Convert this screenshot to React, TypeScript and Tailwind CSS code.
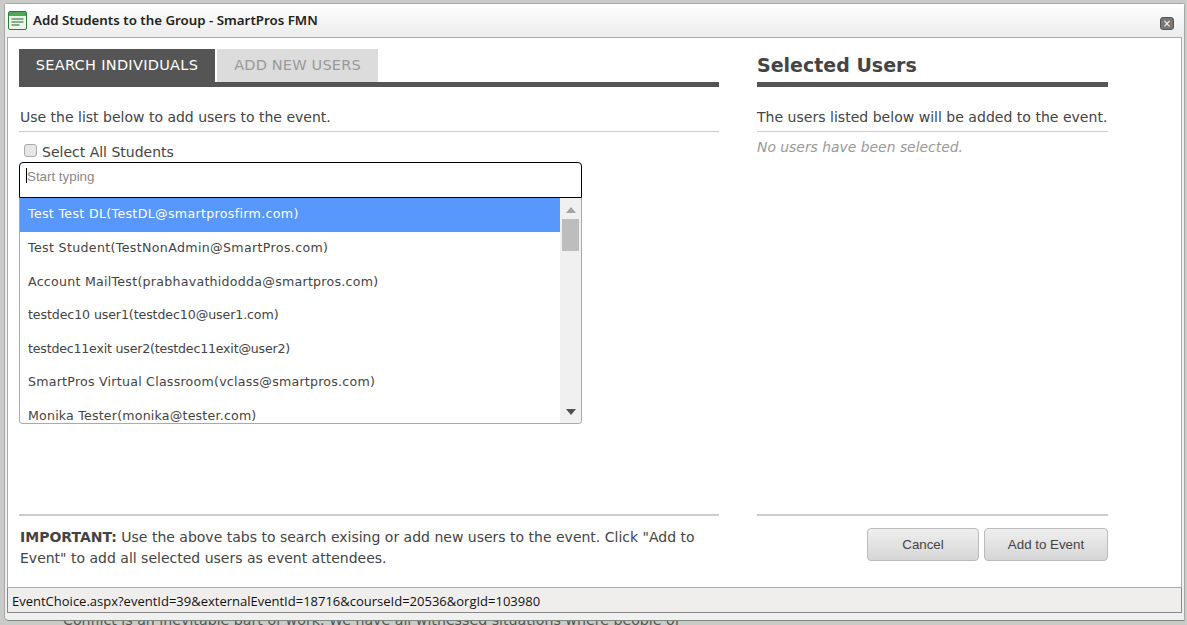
import React from "react";

const body = { fontFamily: '"DejaVu Sans", sans-serif' };
const users = [
  { t: "Test Test DL(TestDL@smartprosfirm.com)", c: "tracking-[0.33px]" },
  { t: "Test Student(TestNonAdmin@SmartPros.com)", c: "tracking-[0.35px]" },
  { t: "Account MailTest(prabhavathidodda@smartpros.com)", c: "tracking-[0.26px]" },
  { t: "testdec10 user1(testdec10@user1.com)", c: "tracking-[-0.1px]" },
  { t: "testdec11exit user2(testdec11exit@user2)", c: "tracking-[-0.2px]" },
  { t: "SmartPros Virtual Classroom(vclass@smartpros.com)", c: "tracking-[0.24px]" },
  { t: "Monika Tester(monika@tester.com)", c: "tracking-[0.2px]" },
];

function WinIcon() {
  return (
    <svg width="19" height="19" viewBox="0 0 19 19" className="shrink-0">
      <rect x="0.5" y="0.5" width="18" height="18" rx="1.5" fill="#eaf5ea" stroke="#2f7a3a" />
      <rect x="1" y="1" width="17" height="4" fill="#4fa858" />
      <path d="M3.5 8h12M3.5 11h12M3.5 14h8" stroke="#23602e" strokeWidth="1.2" />
    </svg>
  );
}

export default function App() {
  return (
    <div className="relative h-[625px] w-[1187px] overflow-hidden bg-[#c9cbc9]" style={body}>
      <div className="absolute left-[63px] top-[610px] whitespace-nowrap text-[14.2px] text-[#555]">
        Conflict is an inevitable part of work. We have all witnessed situations where people of
      </div>
      <div className="relative ml-[4px] mt-[3px] flex h-[618px] w-[1181px] flex-col rounded-t-[3px] rounded-bl-[5px] border border-b-[#7d8a7b] border-[#a8a8a8] bg-[#f0f0f0] pb-[7px]">
        <div className="flex h-[33px] shrink-0 items-center bg-gradient-to-b from-[#ffffff] to-[#ececec] pl-[3px] pr-[10px]">
          <WinIcon />
          <span className="ml-[6px] text-[13.3px] font-semibold text-[#222]" style={{ fontFamily: '"Noto Sans", sans-serif' }}>
            Add Students to the Group - SmartPros FMN
          </span>
          <span className="ml-auto mt-[6px] flex h-[13px] w-[14px] items-center justify-center rounded-[3px] border border-[#555] bg-[#777] text-[10px] leading-none text-white">
            ×
          </span>
        </div>
        <div className="mx-[2px] flex min-h-0 flex-1 border border-[#aaa] bg-white pl-[11px] pt-[11px]">
          <div className="flex w-[700px] shrink-0 flex-col">
            <div className="flex h-[38px] shrink-0 gap-[2px] border-b-[5px] border-[#555]">
              <div className="flex w-[196px] items-center justify-center bg-[#555] text-[14.5px] tracking-[0.3px] text-white">SEARCH INDIVIDUALS</div>
              <div className="flex w-[161px] items-center justify-center bg-[#dcdcdc] text-[14.5px] tracking-[0.2px] text-[#999]">ADD NEW USERS</div>
            </div>
            <p className="mt-[21px] border-b border-[#ccc] pb-[5px] pl-[1px] text-[14px] leading-[18px] text-[#444]">
              Use the list below to add users to the event.
            </p>
            <label className="ml-[5px] mt-[10px] flex h-[20px] items-center text-[14px] text-[#444]">
              <span className="mb-[4px] mr-[5px] h-[13px] w-[13px] rounded-[3px] border border-[#aaa] bg-[#e6e6e6]" />
              Select All Students
            </label>
            <div className="flex h-[36px] w-[563px] rounded-t-[4px] border border-black pl-[6px] pt-[5px]">
              <span className="h-[15px] w-px bg-black" />
              <span className="text-[13.33px] leading-[17px] text-[#888]" style={{ fontFamily: '"Liberation Sans", sans-serif' }}>Start typing</span>
            </div>
            <div className="flex h-[226px] w-[563px] overflow-hidden rounded-b-[4px] border-x border-b border-[#aaa]">
              <div className="flex-1 overflow-hidden">
                {users.map((u, i) => (
                  <div
                    key={u.t}
                    className={`flex h-[33.6px] items-center whitespace-nowrap pl-[8px] text-[12.6px] ${u.c} ${i === 0 ? "bg-[#5897fb] text-white" : "text-[#444]"}`}
                  >
                    {u.t}
                  </div>
                ))}
              </div>
              <div className="flex w-[21px] shrink-0 flex-col items-center bg-[#f0f0f0]">
                <svg width="10" height="6" viewBox="0 0 10 6" className="mt-[9px]"><path d="M5 0l5 6H0z" fill="#a3a3a3" /></svg>
                <div className="mt-[6px] h-[32px] w-[17px] bg-[#bdbdbd]" />
                <div className="flex-1" />
                <svg width="10" height="6" viewBox="0 0 10 6" className="mb-[8px]"><path d="M5 6L0 0h10z" fill="#505050" /></svg>
              </div>
            </div>
            <div className="mt-[90px] border-t-2 border-[#ccc] pl-[1px] pt-[11px] text-[14px] leading-[21px] text-[#444]">
              <b>IMPORTANT:</b> Use the above tabs to search exising or add new users to the event. Click "Add to
              <br />
              Event" to add all selected users as event attendees.
            </div>
          </div>
          <div className="ml-[38px] flex w-[351px] shrink-0 flex-col">
            <div className="flex h-[38px] shrink-0 items-center border-b-[5px] border-[#555] text-[19px] font-bold leading-none text-[#444]">
              Selected Users
            </div>
            <p className="mt-[21px] whitespace-nowrap border-b border-[#ccc] pb-[5px] text-[14.05px] leading-[18px] text-[#444]">
              The users listed below will be added to the event.
            </p>
            <p className="mt-[6px] text-[13.9px] italic leading-[18px] text-[#999]">No users have been selected.</p>
            <div className="mb-[26px] mt-auto border-t-2 border-[#ccc] pt-[12px]">
              <div className="flex justify-end gap-[5px]" style={{ fontFamily: '"Liberation Sans", sans-serif' }}>
                <button className="h-[33px] w-[112px] rounded-[4px] border border-[#bbb] bg-gradient-to-b from-[#efefef] to-[#d6d6d6] text-[13.33px] text-[#444]">Cancel</button>
                <button className="h-[33px] w-[124px] rounded-[4px] border border-[#bbb] bg-gradient-to-b from-[#efefef] to-[#d6d6d6] text-[13.33px] text-[#444]">Add to Event</button>
              </div>
            </div>
          </div>
        </div>
        <div className="mx-[2px] flex h-[25px] shrink-0 items-center border-x border-b border-[#888] bg-[#f0eeed] pl-[4px] pt-[3px] text-[13px] text-[#111]" style={{ fontFamily: '"Open Sans", sans-serif' }}>
          EventChoice.aspx?eventId=39&amp;externalEventId=18716&amp;courseId=20536&amp;orgId=103980
        </div>
      </div>
    </div>
  );
}
